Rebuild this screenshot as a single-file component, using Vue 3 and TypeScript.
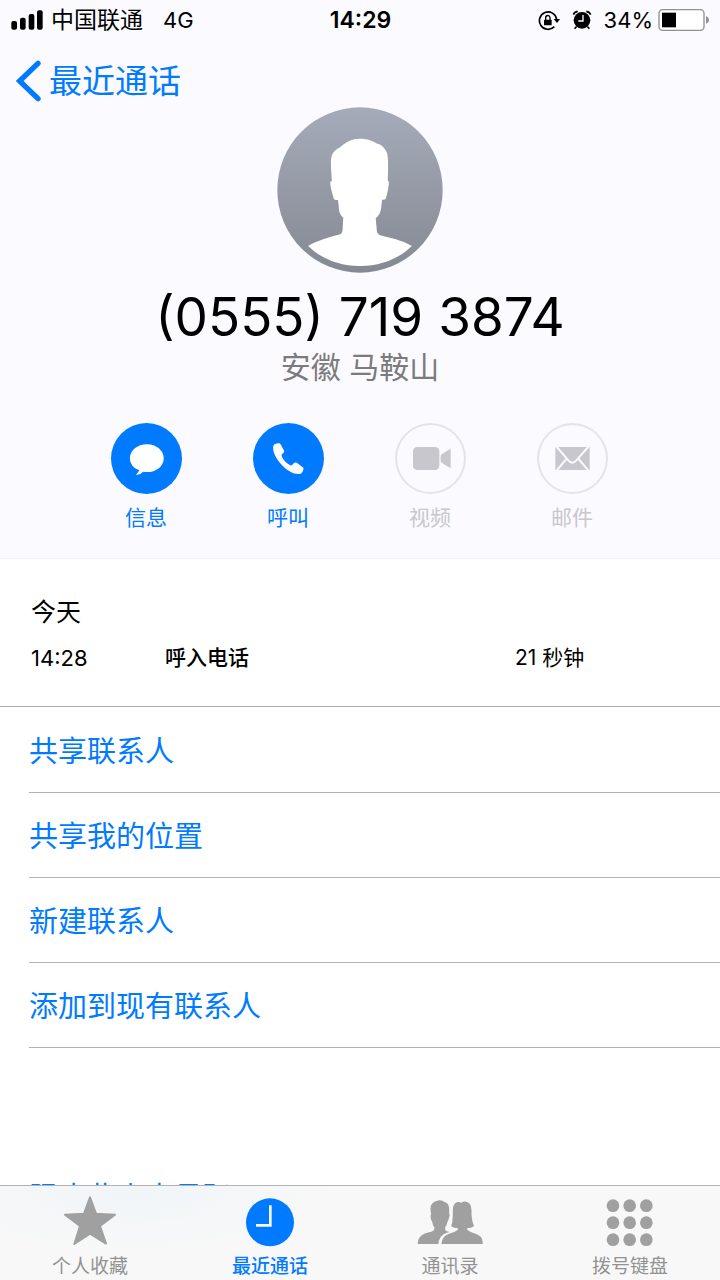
<script setup lang="ts">
import { ref } from 'vue'

interface Action {
  id: string
  label: string
  enabled: boolean
}

interface Tab {
  id: string
  label: string
}

const actions: Action[] = [
  { id: 'message', label: '信息', enabled: true },
  { id: 'call', label: '呼叫', enabled: true },
  { id: 'video', label: '视频', enabled: false },
  { id: 'mail', label: '邮件', enabled: false },
]

const options: string[] = ['共享联系人', '共享我的位置', '新建联系人', '添加到现有联系人']

const tabs: Tab[] = [
  { id: 'favorites', label: '个人收藏' },
  { id: 'recents', label: '最近通话' },
  { id: 'contacts', label: '通讯录' },
  { id: 'keypad', label: '拨号键盘' },
]

const activeTab = ref('recents')
const steps = [0, 1, 2]
</script>

<template>
  <div class="screen">
    <div class="scroll">
      <header class="top">
        <div class="status">
          <div class="status-left">
            <svg class="signal" viewBox="34 28 96 60" aria-hidden="true">
              <rect x="35" y="61" width="17" height="26" rx="6" />
              <rect x="61" y="51" width="17" height="36" rx="6" />
              <rect x="87" y="40" width="17" height="47" rx="6" />
              <rect x="112" y="29" width="17" height="58" rx="6" />
            </svg>
            <span class="carrier">中国联通</span>
            <span class="network">4G</span>
          </div>
          <span class="clock">14:29</span>
          <div class="status-right">
            <svg class="lock" viewBox="714 26 66 63" aria-hidden="true">
              <path d="M770 54A26 26 0 1 0 763 76" fill="none" stroke="#000" stroke-width="5" />
              <path d="M761 53h19l-9 12z" />
              <rect x="732" y="55" width="23" height="17" rx="2" />
              <path d="M737 56v-7a6 6 0 0 1 13 0v7" fill="none" stroke="#000" stroke-width="4" />
            </svg>
            <svg class="alarm" viewBox="817 28 58 60" aria-hidden="true">
              <circle cx="846" cy="59" r="25" />
              <path d="M829 78l-5 6M863 78l5 6" stroke="#000" stroke-width="5" />
              <path d="M820 42q3-8 13-10M872 42q-3-8-13-10" fill="none" stroke="#000" stroke-width="5" />
              <path d="M849 43v18h-14" fill="none" stroke="#fff" stroke-width="4" />
            </svg>
            <span class="percent">34%</span>
            <svg class="battery" viewBox="1074 26 156 66" aria-hidden="true">
              <rect x="1077" y="28" width="135" height="62" rx="11" fill="#fff" stroke="#909094" stroke-width="4" />
              <rect x="1086" y="37" width="42" height="44" />
              <path d="M1218 48q9 3 9 11t-9 11z" fill="#909094" />
            </svg>
          </div>
        </div>
        <nav class="nav">
          <a class="back" href="#recents">
            <svg class="chevron" viewBox="48 178 75 126" aria-hidden="true">
              <path d="M114 188L59 241l55 53" fill="none" stroke="#007aff" stroke-width="16" stroke-linecap="round" stroke-linejoin="miter" />
            </svg>
            <span>最近通话</span>
          </a>
        </nav>
        <svg class="avatar" viewBox="52 22 496 496" aria-hidden="true">
          <defs>
            <linearGradient id="avatar-shade" x1="0" y1="0" x2="0" y2="1">
              <stop offset="0" stop-color="#a5abb9" />
              <stop offset="1" stop-color="#858993" />
            </linearGradient>
          </defs>
          <circle cx="300" cy="270" r="247" fill="url(#avatar-shade)" />
          <path fill="#fff" d="M300 117C323 117 338 124 350 131C365 134 375 146 381 160C385 175 384 205 383 242Q387 243 386 249C385 270 380 285 377 296Q374 300 366 299C364 315 364 332 357 343Q352 351 347 354L350 389Q350 400 360 405C390 413 425 419 455 437C415 475 365 497 300 497C235 497 185 475 145 437C175 420 210 410 238 403Q248 400 248 387L250 353Q244 348 239 338C236 325 237 315 234 300Q222 301 221 294C218 280 213 270 211 249Q211 243 216 243C214 210 211 185 215 170C219 155 230 147 240 143C258 127 277 117 300 117Z" />
        </svg>
        <h1 class="number">(0555) 719 3874</h1>
        <p class="place">安徽 马鞍山</p>
        <div class="actions">
          <button v-for="action in actions" :key="action.id" class="action" type="button" :disabled="!action.enabled">
            <span class="disc">
              <svg v-if="action.id === 'message'" viewBox="60 38 214 214" aria-hidden="true">
                <path fill="#fff" d="M168 102C197 102 219 121 219 144C219 168 197 186 168 186Q162 186 157 185C150 192 144 195 135 194Q144 187 145 180C127 174 117 160 117 144C117 121 139 102 168 102Z" />
              </svg>
              <svg v-else-if="action.id === 'call'" viewBox="487 38 214 214" aria-hidden="true">
                <path fill="#fff" d="M553 101Q561 98 567 99Q571 101 574 109L580 120Q583 125 578 129Q573 132 573 136C576 149 590 161 601 166Q605 166 609 160Q614 156 619 158L634 169Q641 172 639 178Q637 188 631 191C621 193 609 191 600 185C579 174 560 151 552 132C547 119 545 105 553 101Z" />
              </svg>
              <svg v-else-if="action.id === 'video'" viewBox="74 39 213 213" aria-hidden="true">
                <rect x="128" y="111" width="79" height="69" rx="13" fill="#c8c7ce" />
                <path fill="#c8c7ce" d="M211 139Q211 134 216 131L241 116V175L216 160Q211 157 211 152Z" />
              </svg>
              <svg v-else viewBox="500 39 213 213" aria-hidden="true">
                <rect x="555" y="111" width="103" height="69" fill="#c8c7ce" />
                <path d="M557 108L594 151Q606 165 618 151L656 108M557 184L588 147M656 184L625 147" fill="none" stroke="#fbfaff" stroke-width="6" />
              </svg>
            </span>
            <span class="action-label">{{ action.label }}</span>
          </button>
        </div>
      </header>

      <main>
        <section class="history">
          <h2 class="day">今天</h2>
          <div class="entry">
            <time class="entry-time">14:28</time>
            <span class="entry-kind">呼入电话</span>
            <span class="entry-length">21 秒钟</span>
          </div>
        </section>
        <ul class="options">
          <li v-for="option in options" :key="option" class="option">
            <button class="option-button" type="button">{{ option }}</button>
          </li>
        </ul>
        <div class="block">
          <button class="option-button" type="button">阻止此来电号码</button>
        </div>
      </main>
    </div>

    <nav class="tabs">
      <button
        v-for="tab in tabs"
        :key="tab.id"
        type="button"
        class="tab"
        :class="{ active: tab.id === activeTab }"
        @click="activeTab = tab.id"
      >
        <svg v-if="tab.id === 'favorites'" class="tab-icon" viewBox="174 104 192 156" aria-hidden="true">
          <path d="M270 111L288 160L345 163L300 197L318 250L270 220L223 251L240 197L195 163L252 160Z" fill="currentColor" stroke="currentColor" stroke-width="6" stroke-linejoin="round" />
        </svg>
        <svg v-else-if="tab.id === 'recents'" class="tab-icon" viewBox="717 104 192 156" aria-hidden="true">
          <circle cx="813" cy="186" r="72" fill="currentColor" />
          <path d="M814 135V195H771" fill="none" stroke="#f8f8f8" stroke-width="8" />
        </svg>
        <svg v-else-if="tab.id === 'contacts'" class="tab-icon contacts" viewBox="171 104 200 156" aria-hidden="true">
          <path fill="currentColor" d="M237 120Q246 120 252 124Q267 128 267 145V160Q270 164 267 171Q265 180 262 184Q260 195 255 201V209Q259 214 268 215Q247 220 240 233Q235 240 235 251H173Q172 236 183 226C194 216 209 217 219 211Q223 209 223 202Q217 193 216 184Q211 179 211 167Q211 163 213 162Q209 143 213 134Q218 124 237 120Z" />
          <path fill="currentColor" d="M292 125Q299 124 303 127Q314 121 323 126Q333 131 334 150C334 175 337 187 342 197Q333 204 321 204V208C332 218 352 218 363 231Q369 240 368 251H244Q244 238 252 229C264 217 282 218 293 208V204Q280 204 273 197C278 185 278 167 278 149Q278 129 292 125Z" />
        </svg>
        <svg v-else class="tab-icon" viewBox="714 104 192 156" aria-hidden="true">
          <template v-for="row in steps" :key="row">
            <circle v-for="col in steps" :key="col" :cx="759 + col * 50" :cy="136 + row * 51" r="19" fill="currentColor" />
          </template>
        </svg>
        <span>{{ tab.label }}</span>
      </button>
    </nav>
  </div>
</template>

<style>
body {
  margin: 0;
  background: #fff;
}
</style>

<style scoped>
.screen {
  display: flex;
  flex-direction: column;
  height: 100vh;
  font-family: Inter, "Noto Sans CJK SC", sans-serif;
  color: #000;
}

button {
  padding: 0;
  border: 0;
  background: none;
  font: inherit;
  color: inherit;
}

h1,
h2,
p,
ul {
  margin: 0;
  padding: 0;
  font-weight: 400;
}

.scroll {
  flex: 1;
  min-height: 0;
  overflow-y: auto;
  scrollbar-width: none;
}

.top {
  display: flex;
  flex-direction: column;
  align-items: center;
  padding-bottom: 25px;
  background: #fbfaff;
  border-bottom: 1px solid #f3f2f6;
}

.status {
  display: grid;
  grid-template-columns: 1fr auto 1fr;
  align-items: center;
  align-self: stretch;
  box-sizing: border-box;
  height: 40px;
  padding: 0 10px 0 11px;
  font-size: 22px;
  line-height: 40px;
}

.status-left,
.status-right {
  display: flex;
  align-items: center;
}

.status-right {
  justify-content: flex-end;
}

.signal {
  width: 32px;
  height: 20px;
}

.carrier {
  margin-left: 8px;
  font-size: 23px;
}

.network {
  margin-left: 20px;
}

.clock {
  font-size: 23px;
  font-weight: 600;
}

.lock {
  width: 22px;
  height: 21px;
}

.alarm {
  width: 20px;
  height: 20px;
  margin: 0 12px;
}

.battery {
  width: 52px;
  height: 22px;
  margin-left: 5px;
}

.nav {
  align-self: stretch;
  height: 67px;
}

.back {
  display: inline-flex;
  align-items: center;
  gap: 8px;
  height: 82px;
  padding-left: 16px;
  font-size: 33px;
  line-height: 40px;
  color: #007aff;
  text-decoration: none;
}

.chevron {
  width: 25px;
  height: 42px;
}

.avatar {
  width: 166px;
  height: 166px;
}

.number {
  margin-top: 12px;
  font-size: 53px;
  line-height: 64px;
}

.place {
  font-size: 30px;
  line-height: 36px;
  color: #7b7a7e;
}

.actions {
  display: grid;
  grid-template-columns: repeat(4, 142px);
  margin: 38px 2px 0 0;
}

.action {
  display: flex;
  flex-direction: column;
  align-items: center;
  gap: 9px;
  color: #007aff;
}

.disc {
  width: 71px;
  height: 71px;
  border-radius: 50%;
  background: #007aff;
}

.disc svg {
  display: block;
  width: 100%;
  height: 100%;
}

.action:disabled {
  color: #c8c7ce;
}

.action:disabled .disc {
  box-shadow: inset 0 0 0 2px #e4e3e9;
  background: none;
}

.action-label {
  font-size: 21px;
  line-height: 30px;
}

.history {
  padding: 36px 30px 33px 31px;
  border-bottom: 1px solid #acacac;
}

.day {
  font-size: 25px;
  line-height: 34px;
}

.entry {
  display: flex;
  align-items: center;
  margin-top: 14px;
  font-size: 21px;
  line-height: 30px;
}

.entry-time {
  width: 134px;
  font-size: 22px;
}

.entry-kind {
  flex: 1;
  font-weight: 500;
}

.entry-length {
  width: 175px;
}

.options {
  padding-top: 1px;
  list-style: none;
}

.option {
  box-sizing: border-box;
  height: 85px;
  margin-left: 29px;
  border-bottom: 1px solid #b2b2b2;
}

.option-button {
  width: 100%;
  height: 82px;
  font-size: 29px;
  text-align: left;
  color: #007aff;
}

.block {
  margin: 106px 0 0 29px;
}

.tabs {
  display: grid;
  grid-template-columns: repeat(4, 1fr);
  border-top: 1px solid #b2b2b2;
  background: radial-gradient(ellipse 200px 70px at 18% 0, #f0f5f8, #f8f8f8);
}

.tab {
  display: flex;
  flex-direction: column;
  align-items: center;
  height: 94px;
  padding-top: 9px;
  font-size: 19px;
  line-height: 24px;
  color: #929292;
}

.tab.active {
  color: #007aff;
  font-weight: 500;
}

.tab-icon {
  flex: none;
  width: 64px;
  height: 52px;
  margin-bottom: 8px;
  color: #a0a0a0;
}

.tab.active .tab-icon {
  color: #007aff;
}

.contacts {
  width: 67px;
}
</style>
